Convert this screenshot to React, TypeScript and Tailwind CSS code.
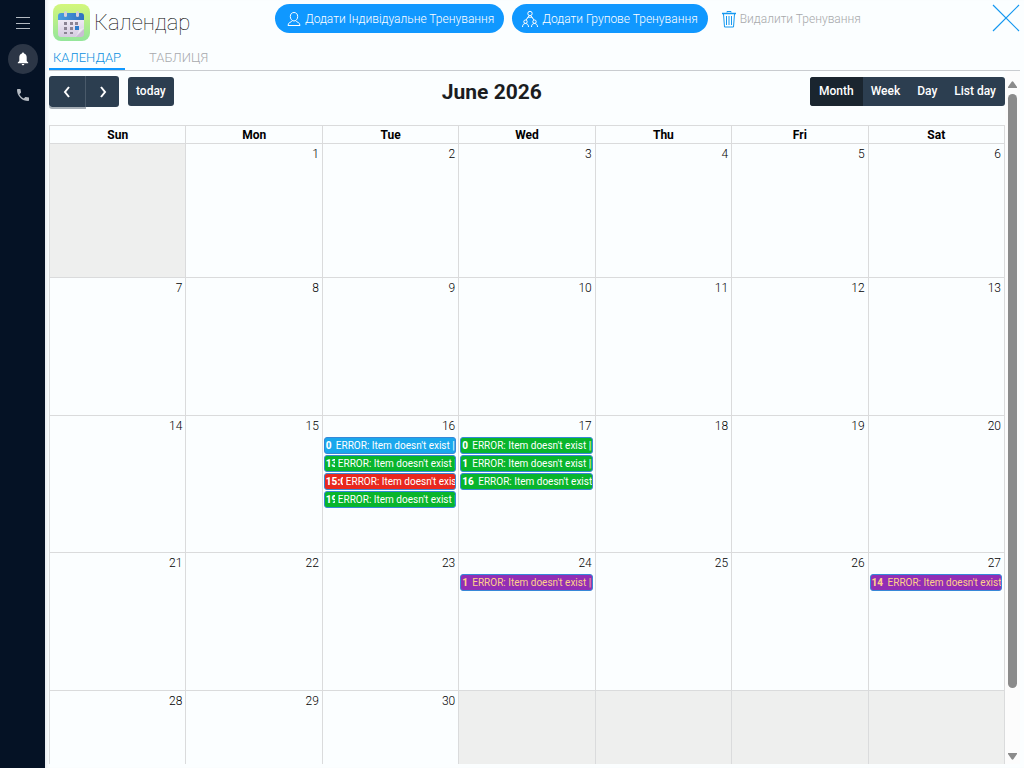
type CalendarEvent = {
  time: string;
  timeWidth: string;
  color: string;
};

type Day = {
  label: string;
  events?: CalendarEvent[];
};

const WEEKDAYS = ["Sun", "Mon", "Tue", "Wed", "Thu", "Fri", "Sat"];
const ROW_HEIGHTS = ["h-[134px]", "h-[138px]", "h-[137px]", "h-[138px]", "h-[138px]"];
const VIEWS = ["Month", "Week", "Day", "List day"];

const BLUE = "bg-[#1aa7ec] text-white";
const GREEN = "bg-[#08b52c] text-white";
const RED = "bg-[#e8281e] text-white";
const PURPLE = "bg-[#922eb5] text-[#ffd08a]";

const EVENTS: Record<number, CalendarEvent[]> = {
  16: [
    { time: "0", timeWidth: "w-[7px]", color: BLUE },
    { time: "13", timeWidth: "w-[9px]", color: GREEN },
    { time: "15:0", timeWidth: "w-[17px]", color: RED },
    { time: "19", timeWidth: "w-[9px]", color: GREEN },
  ],
  17: [
    { time: "0", timeWidth: "w-[7px]", color: GREEN },
    { time: "1", timeWidth: "w-[7px]", color: GREEN },
    { time: "16", timeWidth: "w-[13px]", color: GREEN },
  ],
  24: [{ time: "1", timeWidth: "w-[7px]", color: PURPLE }],
  27: [{ time: "14", timeWidth: "w-[13px]", color: PURPLE }],
};

function buildWeeks(): Day[][] {
  const weeks: Day[][] = [];
  for (let week = 0; week < 5; week += 1) {
    const days: Day[] = [];
    for (let weekday = 0; weekday < 7; weekday += 1) {
      const date = week * 7 + weekday;
      days.push(date < 1 || date > 30 ? { label: "" } : { label: String(date), events: EVENTS[date] });
    }
    weeks.push(days);
  }
  return weeks;
}

function CalendarLogo() {
  return (
    <svg viewBox="0 0 37 37" className="size-[37px]" aria-hidden="true">
      <defs>
        <linearGradient id="logo-bg" x1="0" y1="0" x2="0" y2="1">
          <stop offset="0" stopColor="#d3f77c" />
          <stop offset="1" stopColor="#94e59b" />
        </linearGradient>
        <linearGradient id="logo-top" x1="0" y1="0" x2="1" y2="0">
          <stop offset="0" stopColor="#4b9fe0" />
          <stop offset="1" stopColor="#2f70c0" />
        </linearGradient>
        <linearGradient id="logo-page" x1="0" y1="0" x2="0" y2="1">
          <stop offset="0" stopColor="#f3eff8" />
          <stop offset="1" stopColor="#d5cbe0" />
        </linearGradient>
      </defs>
      <rect width="37" height="37" rx="8" fill="url(#logo-bg)" />
      <path d="M5 13h26v13l-7 7H8a3 3 0 0 1-3-3z" fill="url(#logo-page)" />
      <path d="M31 25v5a3 3 0 0 1-3 3h-5z" fill="#c9bdd4" />
      <path d="M31 24c-3 1-5 1-5 2s-1 4-4 7z" fill="#eee9f3" />
      <path d="M5 16v-4a3 3 0 0 1 3-3h20a3 3 0 0 1 3 3v4z" fill="url(#logo-top)" />
      <g fill="#d3cfda">
        <rect x="11" y="7" width="3" height="6" rx="1.5" />
        <rect x="23" y="7" width="3" height="6" rx="1.5" />
      </g>
      <g fill="#8b8494">
        <rect x="11" y="18" width="3" height="3" />
        <rect x="17" y="18" width="3" height="3" />
        <rect x="22" y="18" width="3" height="3" />
        <rect x="11" y="23" width="3" height="3" />
        <rect x="17" y="23" width="3" height="3" />
        <rect x="11" y="28" width="3" height="2" />
        <rect x="17" y="28" width="3" height="2" />
      </g>
      <rect x="22" y="22" width="4" height="4" fill="#2e7dcc" />
    </svg>
  );
}

function PersonIcon() {
  return (
    <svg viewBox="0 0 14 16" className="h-4 w-[14px]" fill="none" stroke="currentColor" aria-hidden="true">
      <path d="M7 1.500c-2.300 0-3.700 1.700-3.700 4S4.800 10 7 10s3.700-2.200 3.700-4.500-1.400-4-3.700-4z" />
      <path d="M5.500 9.500C4.500 11.500 1 11 1 14.500h12c0-3.500-3.500-3-4.500-5" />
    </svg>
  );
}

function GroupIcon() {
  return (
    <svg viewBox="0 0 16 18" className="h-[18px] w-4" fill="none" stroke="currentColor" aria-hidden="true">
      <circle cx="8" cy="3.500" r="2.200" />
      <path d="M7 5.700L4 10M9 5.700l3 4.300M5.500 8c1-1.200 4-1.200 5 0" />
      <circle cx="3.500" cy="11.700" r="1.700" />
      <circle cx="12.500" cy="11.700" r="1.700" />
      <path d="M.5 17c0-2 1-3.500 3-3.500s3 1.500 3 3.500M9.500 17c0-2 1-3.500 3-3.500s3 1.500 3 3.500" />
    </svg>
  );
}

function TrashIcon() {
  return (
    <svg viewBox="0 0 14 18" className="h-[18px] w-[14px]" fill="none" stroke="#1598f0" aria-hidden="true">
      <path d="M0 3.500h14" strokeWidth="1.500" />
      <path d="M5 2.500v-1h4v1M1.500 4L2.500 17h9L12.500 4M4.500 6v9M7 6v9M9.500 6v9" />
    </svg>
  );
}

function Sidebar() {
  return (
    <nav className="flex w-[45px] shrink-0 flex-col items-center bg-[#051225] pt-2 text-[#b4bac2]">
      <button type="button" aria-label="Menu" className="flex size-[30px] items-center justify-center">
        <svg viewBox="0 0 14 12" className="h-3 w-[14px]" stroke="currentColor" aria-hidden="true">
          <path d="M0 .5h14M0 6.500h14M0 11.500h14" />
        </svg>
      </button>
      <button
        type="button"
        aria-label="Notifications"
        className="mt-1.5 flex size-[30px] items-center justify-center rounded-full bg-[#2c3646] text-white"
      >
        <svg viewBox="0 0 12 14" className="h-[14px] w-3" fill="currentColor" aria-hidden="true">
          <path d="M6 .5c.7 0 1 .4 1 1.100C8.900 2.100 9.700 3.600 9.700 5.500V9l1.500 1.500v.8H.8v-.8L2.300 9V5.500C2.300 3.600 3.100 2.100 5 1.600 5 .9 5.300.5 6 .5zM4.700 12h2.600c0 .8-.6 1.300-1.300 1.300S4.700 12.800 4.700 12z" />
        </svg>
      </button>
      <button type="button" aria-label="Calls" className="mt-1.5 flex size-[30px] items-center justify-center">
        <svg viewBox="3 3 18 18" className="size-3" fill="currentColor" aria-hidden="true">
          <path d="M6.620 10.790c1.440 2.830 3.760 5.140 6.590 6.590l2.200-2.200c.27-.27.67-.36 1.020-.24 1.120.37 2.330.57 3.570.57.55 0 1 .45 1 1V20c0 .55-.45 1-1 1-9.390 0-17-7.610-17-17 0-.55.45-1 1-1h3.500c.55 0 1 .45 1 1 0 1.250.2 2.450.57 3.570.11.35.03.74-.25 1.020l-2.200 2.200z" />
        </svg>
      </button>
    </nav>
  );
}

function PageHeader() {
  return (
    <header className="mr-1 flex h-11 items-start pl-1">
      <div className="flex w-[222px] shrink-0 items-center gap-1 pt-1">
        <CalendarLogo />
        <h1 className="text-[22px] leading-9 font-thin text-black">Календар</h1>
      </div>
      <div className="flex flex-1 gap-2 pt-1 text-xs font-light whitespace-nowrap">
        <button type="button" className="flex h-[29px] items-center gap-1 rounded-full bg-[#1098ff] pr-2.5 pl-3 text-white">
          <PersonIcon />
          Додати Індивідуальне Тренування
        </button>
        <button type="button" className="flex h-[29px] items-center gap-1 rounded-full bg-[#1098ff] px-2.5 text-white">
          <GroupIcon />
          Додати Групове Тренування
        </button>
        <button type="button" disabled className="ml-1 flex h-[29px] items-center gap-1 px-0.5 text-[#a8a9ab]">
          <TrashIcon />
          Видалити Тренування
        </button>
      </div>
      <button type="button" aria-label="Close" className="pt-1">
        <svg viewBox="0 0 28 28" className="size-7" stroke="#1598f0" strokeWidth="1.2" aria-hidden="true">
          <path d="M1 1l26 26M27 1L1 27" />
        </svg>
      </button>
    </header>
  );
}

function Tabs() {
  return (
    <div role="tablist" className="mr-1 flex h-[27px] border-b border-[#c9ccd0] text-[13px] font-light">
      <button role="tab" aria-selected="true" type="button" className="h-[26px] border-b-2 border-[#1098ff] px-1 pt-1 text-[#0b8fe0]">
        КАЛЕНДАР
      </button>
      <button role="tab" aria-selected="false" type="button" className="ml-4 h-[26px] border-b-2 border-transparent px-2 pt-1 text-[#a8a9ad]">
        ТАБЛИЦЯ
      </button>
    </div>
  );
}

function Chevron({ d }: { d: string }) {
  return (
    <svg viewBox="0 0 8 12" className="h-3 w-2" fill="none" stroke="currentColor" strokeWidth="2" aria-hidden="true">
      <path d={d} />
    </svg>
  );
}

function Toolbar() {
  return (
    <div className="flex h-[54px] items-start justify-between pt-[5px] text-xs font-medium text-white">
      <div className="flex items-start gap-[9px]">
        <div className="flex rounded-[3px] bg-[#2c3e50]">
          <button
            type="button"
            aria-label="Previous"
            className="flex h-[31px] w-[37px] items-center justify-center rounded-l-[3px] border-r border-[#4a5a6a] shadow-[0_2px_0_#a5adb5]"
          >
            <Chevron d="M6 1L2 6l4 5" />
          </button>
          <button type="button" aria-label="Next" className="flex h-[31px] w-[33px] items-center justify-center">
            <Chevron d="M2 1l4 5-4 5" />
          </button>
        </div>
        <button type="button" className="mt-px h-[29px] rounded-[3px] bg-[#2c3e50] px-2 pb-0.5">
          today
        </button>
      </div>
      <h2 className="text-[21px] leading-8 font-bold text-[#1b1d1f]">June 2026</h2>
      <div className="mt-px flex overflow-hidden rounded-[3px] bg-[#2c3e50]">
        {VIEWS.map((view) => (
          <button
            key={view}
            type="button"
            aria-pressed={view === "Month"}
            className="-ml-px h-[29px] border border-transparent px-2 pb-0.5 first:ml-0 aria-pressed:bg-[#1a252f]"
          >
            {view}
          </button>
        ))}
      </div>
    </div>
  );
}

function EventItem({ event }: { event: CalendarEvent }) {
  return (
    <a
      href="#event"
      className={`flex h-[17px] items-center gap-[3px] overflow-hidden rounded-[3px] border border-[#3788d8] pl-px text-[10px] leading-[15px] whitespace-nowrap ${event.color}`}
    >
      <span className={`shrink-0 overflow-hidden font-extrabold ${event.timeWidth}`}>{event.time}</span>
      <span className="min-w-0 flex-1 overflow-hidden">ERROR: Item doesn't exist ||</span>
    </a>
  );
}

function MonthGrid() {
  return (
    <table className="w-full table-fixed border-collapse text-xs text-black">
      <thead>
        <tr className="h-[18px]">
          {WEEKDAYS.map((name) => (
            <th key={name} scope="col" className="border border-[#dadbdc] p-0 leading-4 font-bold">
              {name}
            </th>
          ))}
        </tr>
      </thead>
      <tbody>
        {buildWeeks().map((days, week) => (
          <tr key={week} className={ROW_HEIGHTS[week]}>
            {days.map((day, idx) => (
              <td key={idx} className={`border border-[#dadbdc] p-0 align-top ${day.label ? "" : "bg-[#eeefee]"}`}>
                <div className="h-[21px] pr-[3px] text-right leading-5 font-light">{day.label}</div>
                <div className="mr-0.5 ml-px flex flex-col gap-px">
                  {day.events?.map((event, eventIdx) => <EventItem key={eventIdx} event={event} />)}
                </div>
              </td>
            ))}
          </tr>
        ))}
      </tbody>
    </table>
  );
}

function ScrollRail() {
  return (
    <div className="flex w-[15px] shrink-0 flex-col items-center gap-1.5 bg-[#fcfcfc] py-[10px]" aria-hidden="true">
      <svg viewBox="0 0 9 7" className="h-[7px] w-[9px]" fill="#8b8b8b">
        <path d="M3.500 1Q4.500-.5 5.500 1L9 6v1H0V6z" />
      </svg>
      <div className="flex flex-1 flex-col self-stretch px-[3px]">
        <div className="basis-[91%] rounded-full bg-[#8b8b8b]" />
      </div>
      <svg viewBox="0 0 9 7" className="-mb-1.5 h-[7px] w-[9px]" fill="#8b8b8b">
        <path d="M3.500 6Q4.500 7.500 5.500 6L9 1V0H0v1z" />
      </svg>
    </div>
  );
}

export default function App() {
  return (
    <div className="flex h-screen overflow-hidden bg-[#fbfeff] font-['Roboto',sans-serif]">
      <Sidebar />
      <main className="flex min-w-0 flex-1 flex-col pb-1 pl-1 shadow-[inset_4px_0_4px_-3px_#dfe3e8]">
        <PageHeader />
        <Tabs />
        <div className="mr-1 flex min-h-0 flex-1">
          <div className="min-w-0 flex-1 overflow-hidden">
            <Toolbar />
            <MonthGrid />
          </div>
          <ScrollRail />
        </div>
      </main>
    </div>
  );
}
